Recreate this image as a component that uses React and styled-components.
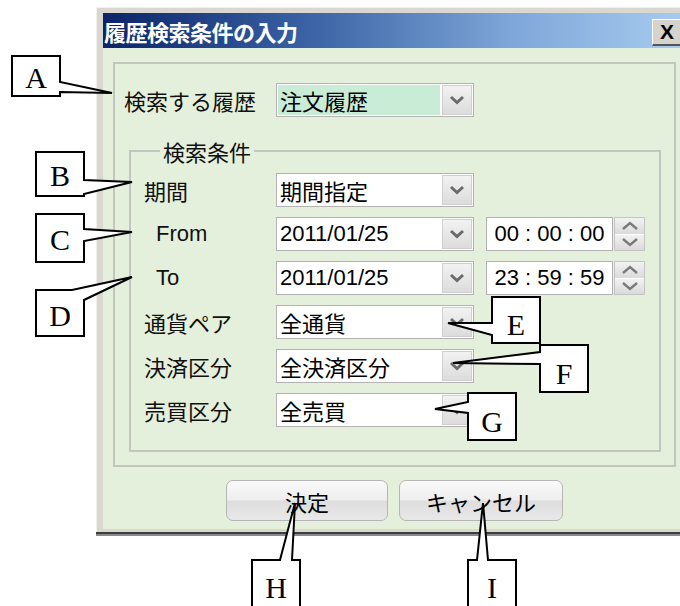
import React from "react";
import styled, { createGlobalStyle } from "styled-components";

const GlobalStyle = createGlobalStyle`
  html, body {
    margin: 0;
    padding: 0;
    background: #ffffff;
    overflow: hidden;
  }
  * {
    box-sizing: border-box;
  }
`;

const uiFont = `"Liberation Sans", "Noto Sans CJK JP", sans-serif`;

const callouts = [
  { letter: "A", d: "M12,56 H60 V82 L112,93 L60,92 V96 H12 Z", x: 36, y: 88 },
  { letter: "B", d: "M36,152 H84 V180 L132,182 L84,194 V196 H36 Z", x: 60, y: 186 },
  { letter: "C", d: "M36,214 H84 V229 L132,232 L84,241 V262 H36 Z", x: 60, y: 250 },
  { letter: "D", d: "M36,290 H72 L132,277 L84,300 V336 H36 Z", x: 60, y: 326 },
  { letter: "E", d: "M492,297 H540 V343 H492 V335 L448,323 L492,323 Z", x: 516, y: 335 },
  { letter: "F", d: "M540,345 H588 V392 H540 V364 L453,363 L540,352 Z", x: 564, y: 384 },
  { letter: "G", d: "M468,393 H516 V440 H468 V413 L435,409 L468,402 Z", x: 492, y: 432 },
  { letter: "H", d: "M252,560 H280 L295,503 L292,560 H300 V612 H252 Z", x: 276, y: 598 },
  { letter: "I", d: "M468,560 H477 L483,503 L488,560 H516 V612 H468 Z", x: 492, y: 598 },
];

function Chevron({ up }) {
  return (
    <svg width="16" height="10" viewBox="0 0 16 10">
      <polyline
        points={up ? "2,8 8,2.5 14,8" : "2,2 8,7.5 14,2"}
        fill="none"
        stroke="#6a6a6a"
        strokeWidth="3"
        strokeLinejoin="miter"
      />
    </svg>
  );
}

function SmallChevron({ up }) {
  return (
    <svg width="18" height="9" viewBox="0 0 18 9">
      <polyline
        points={up ? "2,8 9,2 16,8" : "2,1 9,7 16,1"}
        fill="none"
        stroke="#7a7a7a"
        strokeWidth="2.4"
      />
    </svg>
  );
}

function Combo({ value, mint }) {
  return (
    <ComboBox>
      <ComboText $mint={mint}>{value}</ComboText>
      <DropButton>
        <Chevron />
      </DropButton>
    </ComboBox>
  );
}

function TimeField({ value }) {
  return (
    <TimeBox>
      <TimeText>{value}</TimeText>
      <Spinner>
        <SpinHalf>
          <SmallChevron up />
        </SpinHalf>
        <SpinHalf>
          <SmallChevron />
        </SpinHalf>
      </Spinner>
    </TimeBox>
  );
}

export default function App() {
  return (
    <Page>
      <GlobalStyle />
      <Window>
        <TitleBar>
          <Title>履歴検索条件の入力</Title>
          <CloseButton>X</CloseButton>
        </TitleBar>
        <Body>
          <OuterGroup>
            <TopRow>
              <TopLabel>検索する履歴</TopLabel>
              <Combo value="注文履歴" mint />
            </TopRow>
            <Conditions>
              <Legend>検索条件</Legend>
              <Rows>
                <Row>
                  <Label>期間</Label>
                  <Combo value="期間指定" />
                </Row>
                <Row>
                  <Label $indent>From</Label>
                  <Combo value="2011/01/25" />
                  <TimeField value="00 : 00 : 00" />
                </Row>
                <Row>
                  <Label $indent>To</Label>
                  <Combo value="2011/01/25" />
                  <TimeField value="23 : 59 : 59" />
                </Row>
                <Row>
                  <Label>通貨ペア</Label>
                  <Combo value="全通貨" />
                </Row>
                <Row>
                  <Label>決済区分</Label>
                  <Combo value="全決済区分" />
                </Row>
                <Row>
                  <Label>売買区分</Label>
                  <Combo value="全売買" />
                </Row>
              </Rows>
            </Conditions>
          </OuterGroup>
          <ButtonRow>
            <Button $w={162}>決定</Button>
            <Button $w={164}>キャンセル</Button>
          </ButtonRow>
        </Body>
      </Window>
      <Annotations width="680" height="606" viewBox="0 0 680 606">
        {callouts.map((c) => (
          <g key={c.letter}>
            <path d={c.d} fill="#ffffff" stroke="#000000" strokeWidth="2" />
            <CalloutLetter x={c.x} y={c.y} textAnchor="middle">
              {c.letter}
            </CalloutLetter>
          </g>
        ))}
      </Annotations>
    </Page>
  );
}

const Page = styled.div`
  position: relative;
  width: 680px;
  height: 606px;
  overflow: hidden;
  padding: 7px 0 0 96px;
  font-family: ${uiFont};
`;

const Window = styled.div`
  width: 595px;
  padding: 5px 5px 3px 6px;
  background: #dad7d0;
  border-left: 1px solid #f2f0ec;
  border-top: 1px solid #f2f0ec;
  box-shadow: 0 2px 0 #3c3c3c, 0 4px 0 #8a8a8a;
`;

const TitleBar = styled.div`
  height: 35px;
  display: flex;
  align-items: center;
  justify-content: space-between;
  padding: 0 3px 0 1px;
  background: linear-gradient(90deg, #0b2468 0%, #3a62a4 35%, #7ea6d8 70%, #a8ccf0 100%);
`;

const Title = styled.div`
  color: #ffffff;
  font-size: 22px;
  font-weight: bold;
  font-family: "Noto Sans CJK JP", sans-serif;
  letter-spacing: -0.5px;
  line-height: 1;
`;

const CloseButton = styled.div`
  width: 31px;
  height: 27px;
  margin-top: 4px;
  display: flex;
  align-items: center;
  justify-content: center;
  background: #d6d3cc;
  border-top: 1px solid #ffffff;
  border-left: 1px solid #ffffff;
  border-right: 2px solid #555555;
  border-bottom: 2px solid #555555;
  font-family: "Liberation Sans", sans-serif;
  font-size: 21px;
  font-weight: bold;
  color: #000000;
`;

const Body = styled.div`
  background: #e4f0dc;
  padding: 14px 10px 8px;
`;

const OuterGroup = styled.div`
  border: 2px solid #c3c6c0;
  padding: 19px 0 13px 9px;
`;

const TopRow = styled.div`
  display: flex;
  align-items: center;
  height: 33px;
`;

const TopLabel = styled.div`
  width: 152px;
  font-size: 22px;
  color: #111111;
  font-family: "Noto Sans CJK JP", sans-serif;
`;

const Conditions = styled.fieldset`
  margin: 22px 13px 0 5px;
  padding: 9px 0 23px 13px;
  border: 2px solid #c3c6c0;
  min-width: 0;
`;

const Legend = styled.legend`
  margin-left: 16px;
  padding: 0 3px;
  font-size: 22px;
  line-height: 26px;
  color: #111111;
  font-family: "Noto Sans CJK JP", sans-serif;
`;

const Rows = styled.div`
  display: flex;
  flex-direction: column;
  gap: 10px;
`;

const Row = styled.div`
  display: flex;
  align-items: center;
  height: 34px;
`;

const Label = styled.div`
  width: 132px;
  padding-left: ${(p) => (p.$indent ? "12px" : "0")};
  font-size: 22px;
  color: #111111;
`;

const ComboBox = styled.div`
  width: 198px;
  height: 34px;
  display: flex;
  border: 1px solid #b3b3b3;
  background: #ffffff;
  padding: 1px;
  gap: 2px;
`;

const ComboText = styled.div`
  flex: 1;
  display: flex;
  align-items: center;
  padding-left: 2px;
  background: ${(p) => (p.$mint ? "#c9ecd6" : "#ffffff")};
  font-size: 22px;
  color: #000000;
  white-space: nowrap;
  overflow: hidden;
`;

const DropButton = styled.div`
  width: 30px;
  display: flex;
  align-items: center;
  justify-content: center;
  background: linear-gradient(#f2f2f2, #dcdcdc);
  border: 1px solid #d0d0d0;
`;

const TimeBox = styled.div`
  margin-left: 12px;
  height: 34px;
  display: flex;
  gap: 1px;
`;

const TimeText = styled.div`
  width: 127px;
  display: flex;
  align-items: center;
  justify-content: center;
  background: #ffffff;
  border: 1px solid #b3b3b3;
  font-size: 22px;
  color: #000000;
  white-space: pre;
`;

const Spinner = styled.div`
  width: 31px;
  display: flex;
  flex-direction: column;
  border: 1px solid #c4c4c4;
  background: #ffffff;
  gap: 1px;
`;

const SpinHalf = styled.div`
  flex: 1;
  display: flex;
  align-items: center;
  justify-content: center;
  background: linear-gradient(#f2f2f2, #dadada);
`;

const ButtonRow = styled.div`
  display: flex;
  justify-content: center;
  gap: 11px;
  margin-top: 13px;
`;

const Button = styled.div`
  width: ${(p) => p.$w}px;
  height: 41px;
  display: flex;
  align-items: center;
  justify-content: center;
  border: 1px solid #b5b5b5;
  border-radius: 7px;
  background: linear-gradient(#fafafa 0%, #eeeeee 48%, #dedede 52%, #e8e8e8 100%);
  font-size: 22px;
  color: #000000;
  font-family: "Noto Sans CJK JP", sans-serif;
`;

const Annotations = styled.svg`
  position: absolute;
  left: 0;
  top: 0;
  pointer-events: none;
`;

const CalloutLetter = styled.text`
  font-family: "Liberation Serif", serif;
  font-size: 30px;
  fill: #000000;
`;
